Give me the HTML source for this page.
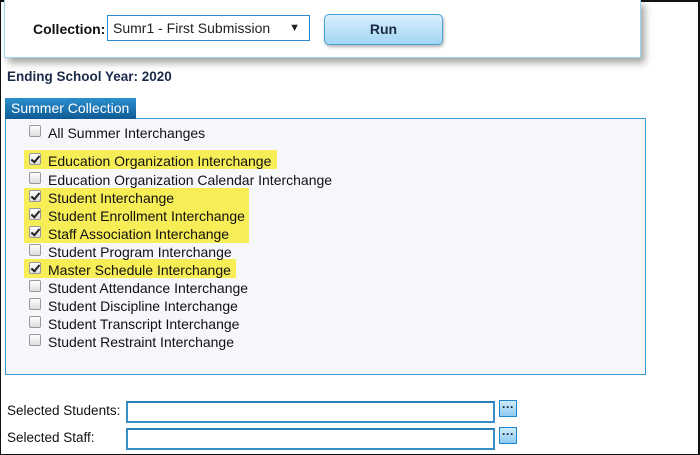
<!DOCTYPE html>
<html><head><meta charset="utf-8"><style>
*{margin:0;padding:0;box-sizing:border-box}
body{width:700px;height:455px;background:#fff;position:relative;overflow:hidden;font-family:"Liberation Sans",sans-serif;color:#1a1a2e}
.frame{position:absolute;left:0;top:0;width:700px;height:455px;border:2px solid #111;border-bottom:1px solid #111;border-left:1px solid #111}
.top{position:absolute;left:4px;top:0;width:637px;height:58px;background:#fff;border:1px solid #9fd4f0;border-top:none;box-shadow:4px 5px 7px rgba(0,0,0,.35)}
.a{position:absolute;white-space:nowrap}
.sel{position:absolute;left:107px;top:15px;width:203px;height:26px;border:1px solid #2a8fd0;background:#fff;font-size:14px;padding:4px 0 0 5px;color:#222}
.sel span{position:absolute;right:9px;top:6px;font-size:11px}
.run{position:absolute;left:324px;top:14px;width:119px;height:31px;border:1px solid #4aa3d8;border-radius:5px;background:linear-gradient(#d8eefb,#a4d6f4);font-weight:bold;font-size:14px;text-align:center;line-height:29px;color:#1a2a44;box-shadow:1px 2px 3px rgba(0,0,0,.3)}
.tab{position:absolute;left:5px;top:98px;width:131px;height:21px;background:linear-gradient(#2c8fce,#0e5a94);color:#fff;font-size:14px;padding:2px 0 0 6px}
.box{position:absolute;left:5px;top:118px;width:641px;height:257px;border:1px solid #3a9ad9;background:#f6f7fb}
.hl{position:absolute;left:24px;background:#f7ee57}
.cb{position:absolute;left:29px;width:12px;height:12px;border:1px solid #999;border-radius:2px;background:linear-gradient(#fff,#ddd)}
.cb.on::after{content:"";position:absolute;left:3px;top:0px;width:3px;height:7px;border:solid #222;border-width:0 2px 2px 0;transform:rotate(40deg)}
.t{position:absolute;left:48px;font-size:14px;color:#111;white-space:nowrap}
.inp{position:absolute;left:126px;width:369px;height:22px;border:2px solid #3a8fc8;border-top-color:#2a7fb8;background:#fff}
.btn{position:absolute;left:499px;width:18px;height:17px;border:1px solid #1b8ad0;background:linear-gradient(#cfeafb,#8fcaf0);font-size:12px;font-weight:bold;text-align:center;line-height:12px;color:#123}
.lab{position:absolute;left:7px;font-size:13.5px;color:#111}
</style></head><body>
<div class="frame"></div>
<div class="top"></div>
<div class="a" style="left:33px;top:21px;font-weight:bold;font-size:14px;color:#111">Collection:</div>
<div class="sel">Sumr1 - First Submission<span>▼</span></div>
<div class="run">Run</div>
<div class="a" style="left:7px;top:69px;font-weight:bold;font-size:13.5px;color:#1b2b4a">Ending School Year: 2020</div>
<div class="box"></div>
<div class="tab">Summer Collection</div>
<div class="hl" style="top:150px;width:253px;height:19px"></div>
<div class="hl" style="top:188px;width:225px;height:55px"></div>
<div class="hl" style="top:259px;width:212px;height:19px"></div>

<div class="cb" style="top:125px"></div><div class="t" style="top:125px">All Summer Interchanges</div>
<div class="cb on" style="top:153px"></div><div class="t" style="top:153px">Education Organization Interchange</div>
<div class="cb" style="top:172px"></div><div class="t" style="top:172px">Education Organization Calendar Interchange</div>
<div class="cb on" style="top:190px"></div><div class="t" style="top:190px">Student Interchange</div>
<div class="cb on" style="top:208px"></div><div class="t" style="top:208px">Student Enrollment Interchange</div>
<div class="cb on" style="top:226px"></div><div class="t" style="top:226px">Staff Association Interchange</div>
<div class="cb" style="top:244px"></div><div class="t" style="top:244px">Student Program Interchange</div>
<div class="cb on" style="top:262px"></div><div class="t" style="top:262px">Master Schedule Interchange</div>
<div class="cb" style="top:280px"></div><div class="t" style="top:280px">Student Attendance Interchange</div>
<div class="cb" style="top:298px"></div><div class="t" style="top:298px">Student Discipline Interchange</div>
<div class="cb" style="top:316px"></div><div class="t" style="top:316px">Student Transcript Interchange</div>
<div class="cb" style="top:334px"></div><div class="t" style="top:334px">Student Restraint Interchange</div>

<div class="lab" style="top:403px">Selected Students:</div>
<div class="inp" style="top:401px"></div>
<div class="btn" style="top:400px">···</div>
<div class="lab" style="top:430px">Selected Staff:</div>
<div class="inp" style="top:428px"></div>
<div class="btn" style="top:427px">···</div>
</body></html>
